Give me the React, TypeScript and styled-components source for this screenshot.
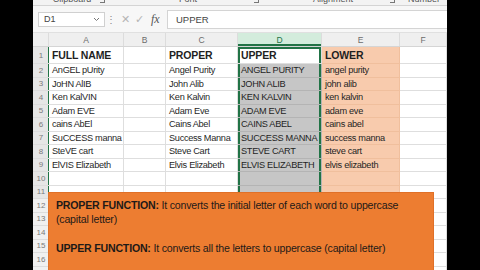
import styled, { createGlobalStyle } from "styled-components";

const GlobalStyle = createGlobalStyle`
  html, body {
    margin: 0;
    padding: 0;
    background: #000;
  }
  body {
    font-family: "Liberation Sans", Arial, sans-serif;
  }
`;

const Frame = styled.div`
  width: 480px;
  height: 270px;
  display: flex;
  justify-content: center;
  background: #000;
  overflow: hidden;
`;

const Screen = styled.div`
  width: 414px;
  height: 270px;
  display: flex;
  flex-direction: column;
  background: #fff;
  overflow: hidden;
`;

const RibbonStrip = styled.div`
  height: 5px;
  flex-shrink: 0;
  display: flex;
  align-items: flex-end;
  background: #f3f3f3;
  border-bottom: 1px solid #d4d4d4;
  overflow: hidden;
`;

const RibbonGroup = styled.div<{ $w: number }>`
  width: ${(p) => p.$w}px;
  height: 5px;
  display: flex;
  justify-content: center;
  position: relative;
  overflow: hidden;
  font-size: 9px;
  color: #555;
`;

const RibbonLabel = styled.span`
  margin-top: -6px;
  line-height: 10px;
`;

const Launcher = styled.span`
  position: absolute;
  right: 6px;
  top: -3px;
  width: 4px;
  height: 5px;
  border-right: 1px solid #777;
  border-bottom: 1px solid #777;
`;

const FormulaBar = styled.div`
  height: 26px;
  flex-shrink: 0;
  display: flex;
  align-items: center;
  padding: 0 0 0 5px;
  background: #f7f7f7;
  border-bottom: 1px solid #e0e0e0;
`;

const NameBox = styled.div`
  width: 67px;
  height: 15px;
  box-sizing: border-box;
  display: flex;
  align-items: center;
  justify-content: space-between;
  padding: 0 4px 0 5px;
  background: #fff;
  border: 1px solid #d0d0d0;
  font-size: 9px;
  color: #444;
`;

const Dots = styled.span`
  width: 12px;
  text-align: center;
  font-size: 10px;
  color: #888;
`;

const FormulaIcons = styled.div`
  width: 46px;
  display: flex;
  align-items: center;
  gap: 5px;
  padding-left: 4px;
  color: #b5b5b5;
  font-size: 11px;
`;

const Fx = styled.span`
  font-family: "Liberation Serif", "Times New Roman", serif;
  font-style: italic;
  font-size: 12px;
  color: #555;
  margin-left: 2px;
`;

const FormulaInput = styled.div`
  flex: 1;
  height: 17px;
  display: flex;
  align-items: center;
  padding-left: 8px;
  background: #fff;
  border-top: 1px solid #d4d4d4;
  border-bottom: 1px solid #d4d4d4;
  border-left: 1px solid #d4d4d4;
  font-size: 9.5px;
  color: #444;
`;

const Sheet = styled.div`
  position: relative;
  flex: 1;
  overflow: hidden;
`;

const cols = "16px 75px 42px 72px 84px 78px 1fr";

const HeaderRow = styled.div`
  display: grid;
  grid-template-columns: ${cols};
  height: 13px;
  background: #efefef;
  border-bottom: 1px solid #d5d5d5;
`;

const ColHead = styled.div<{ $active?: boolean }>`
  display: flex;
  align-items: center;
  justify-content: center;
  font-size: 8.5px;
  color: ${(p) => (p.$active ? "#217346" : "#6b6b6b")};
  background: ${(p) => (p.$active ? "#d3ecdc" : "transparent")};
  border-right: 1px solid #dcdcdc;
  box-shadow: ${(p) => (p.$active ? "inset 0 -2px 0 #217346" : "none")};
`;

const Row = styled.div<{ $h: number }>`
  display: grid;
  grid-template-columns: ${cols};
  height: ${(p) => p.$h}px;
`;

const RowHead = styled.div<{ $sel?: boolean }>`
  display: flex;
  align-items: center;
  justify-content: center;
  font-size: 8px;
  color: #7a7a7a;
  background: ${(p) => (p.$sel ? "#e6e6e6" : "#f0f0f0")};
  border-bottom: 1px solid #dcdcdc;
  box-shadow: ${(p) => (p.$sel ? "inset -1px 0 0 #217346" : "inset -1px 0 0 #d0d0d0")};
`;

type Fill = "gray" | "peach" | "none";

const fills: Record<Fill, string> = {
  gray: "#c6c6c6",
  peach: "#f8cbad",
  none: "#fff",
};

const lines: Record<Fill, string> = {
  gray: "#b4b4b4",
  peach: "#f0bf9d",
  none: "#dedede",
};

const Cell = styled.div<{ $fill?: Fill; $bold?: boolean; $sel?: boolean; $top?: boolean }>`
  display: flex;
  align-items: center;
  padding-left: 3px;
  overflow: hidden;
  white-space: nowrap;
  font-size: ${(p) => (p.$bold ? "10.5px" : "9.2px")};
  font-weight: ${(p) => (p.$bold ? 700 : 400)};
  letter-spacing: ${(p) => (p.$bold ? "-0.15px" : "-0.3px")};
  color: #1f1f1f;
  background: ${(p) => fills[p.$fill || "none"]};
  border-right: 1px solid ${(p) => lines[p.$fill || "none"]};
  border-bottom: 1px solid ${(p) => lines[p.$fill || "none"]};
  box-shadow: ${(p) =>
    p.$sel
      ? `inset 2px 0 0 #217346, inset -2px 0 0 #217346${p.$top ? ", inset 0 2px 0 #217346" : ""}`
      : "none"};
`;

const TextBox = styled.div`
  position: absolute;
  left: 16px;
  top: 160px;
  width: 384px;
  height: 120px;
  box-sizing: border-box;
  padding: 6px 0 0 7px;
  background: #ed7d31;
  color: #1d1a18;
  font-size: 10.6px;
  line-height: 13.5px;
  letter-spacing: -0.2px;
  white-space: nowrap;
  box-shadow: 0 0 0 1px #e07028;
`;

const Para = styled.p`
  margin: 0 0 16px 0;
`;

const Strong = styled.b`
  font-weight: 700;
`;

type DataRow = [string, string, string, string];

const data: DataRow[] = [
  ["AnGEL pUrity", "Angel Purity", "ANGEL PURITY", "angel purity"],
  ["JoHN AlIB", "John Alib", "JOHN ALIB", "john alib"],
  ["Ken KalVIN", "Ken Kalvin", "KEN KALVIN", "ken kalvin"],
  ["Adam EVE", "Adam Eve", "ADAM EVE", "adam eve"],
  ["cains AbEl", "Cains Abel", "CAINS ABEL", "cains abel"],
  ["SuCCESS manna", "Success Manna", "SUCCESS MANNA", "success manna"],
  ["SteVE cart", "Steve Cart", "STEVE CART", "steve cart"],
  ["ElVIS Elizabeth", "Elvis Elizabeth", "ELVIS ELIZABETH", "elvis elizabeth"],
  ["", "", "", ""],
  ["", "", "", ""],
];

const emptyRows = [12, 13, 14, 15, 16, 17];

const Chevron = () => (
  <svg width="7" height="5" viewBox="0 0 7 5">
    <path d="M1 1 L3.5 3.5 L6 1" fill="none" stroke="#777" strokeWidth="1" />
  </svg>
);

const App = () => {
  return (
    <Frame>
      <GlobalStyle />
      <Screen>
        <RibbonStrip>
          <RibbonGroup $w={78}>
            <RibbonLabel>Clipboard</RibbonLabel>
            <Launcher />
          </RibbonGroup>
          <RibbonGroup $w={154}>
            <RibbonLabel>Font</RibbonLabel>
            <Launcher />
          </RibbonGroup>
          <RibbonGroup $w={136}>
            <RibbonLabel>Alignment</RibbonLabel>
            <Launcher />
          </RibbonGroup>
          <RibbonGroup $w={46}>
            <RibbonLabel>Number</RibbonLabel>
          </RibbonGroup>
        </RibbonStrip>

        <FormulaBar>
          <NameBox>
            <span>D1</span>
            <Chevron />
          </NameBox>
          <Dots>⋮</Dots>
          <FormulaIcons>
            <span>✕</span>
            <span>✓</span>
            <Fx>fx</Fx>
          </FormulaIcons>
          <FormulaInput>UPPER</FormulaInput>
        </FormulaBar>

        <Sheet>
          <HeaderRow>
            <ColHead />
            <ColHead>A</ColHead>
            <ColHead>B</ColHead>
            <ColHead>C</ColHead>
            <ColHead $active>D</ColHead>
            <ColHead>E</ColHead>
            <ColHead>F</ColHead>
          </HeaderRow>

          <Row $h={17}>
            <RowHead $sel>1</RowHead>
            <Cell $bold>FULL NAME</Cell>
            <Cell />
            <Cell $bold>PROPER</Cell>
            <Cell $bold $sel $top>UPPER</Cell>
            <Cell $bold $fill="peach">LOWER</Cell>
            <Cell />
          </Row>

          {data.map((r, i) => (
            <Row $h={13.5} key={i}>
              <RowHead $sel>{i + 2}</RowHead>
              <Cell>{r[0]}</Cell>
              <Cell />
              <Cell>{r[1]}</Cell>
              <Cell $fill="gray" $sel>{r[2]}</Cell>
              <Cell $fill="peach">{r[3]}</Cell>
              <Cell />
            </Row>
          ))}

          {emptyRows.map((n) => (
            <Row $h={13.5} key={n}>
              <RowHead>{n}</RowHead>
              <Cell />
              <Cell />
              <Cell />
              <Cell />
              <Cell />
              <Cell />
            </Row>
          ))}

          <TextBox>
            <Para>
              <Strong>PROPER FUNCTION:</Strong> It converts the initial letter of each word to uppercase
              <br />
              (capital letter)
            </Para>
            <Para>
              <Strong>UPPER FUNCTION:</Strong> It converts all the letters to uppercase (capital letter)
            </Para>
            <Para>
              <Strong>LOWER FUNCTION:</Strong> It converts all the letters to lowercase (small letter)
            </Para>
          </TextBox>
        </Sheet>
      </Screen>
    </Frame>
  );
};

export default App;
